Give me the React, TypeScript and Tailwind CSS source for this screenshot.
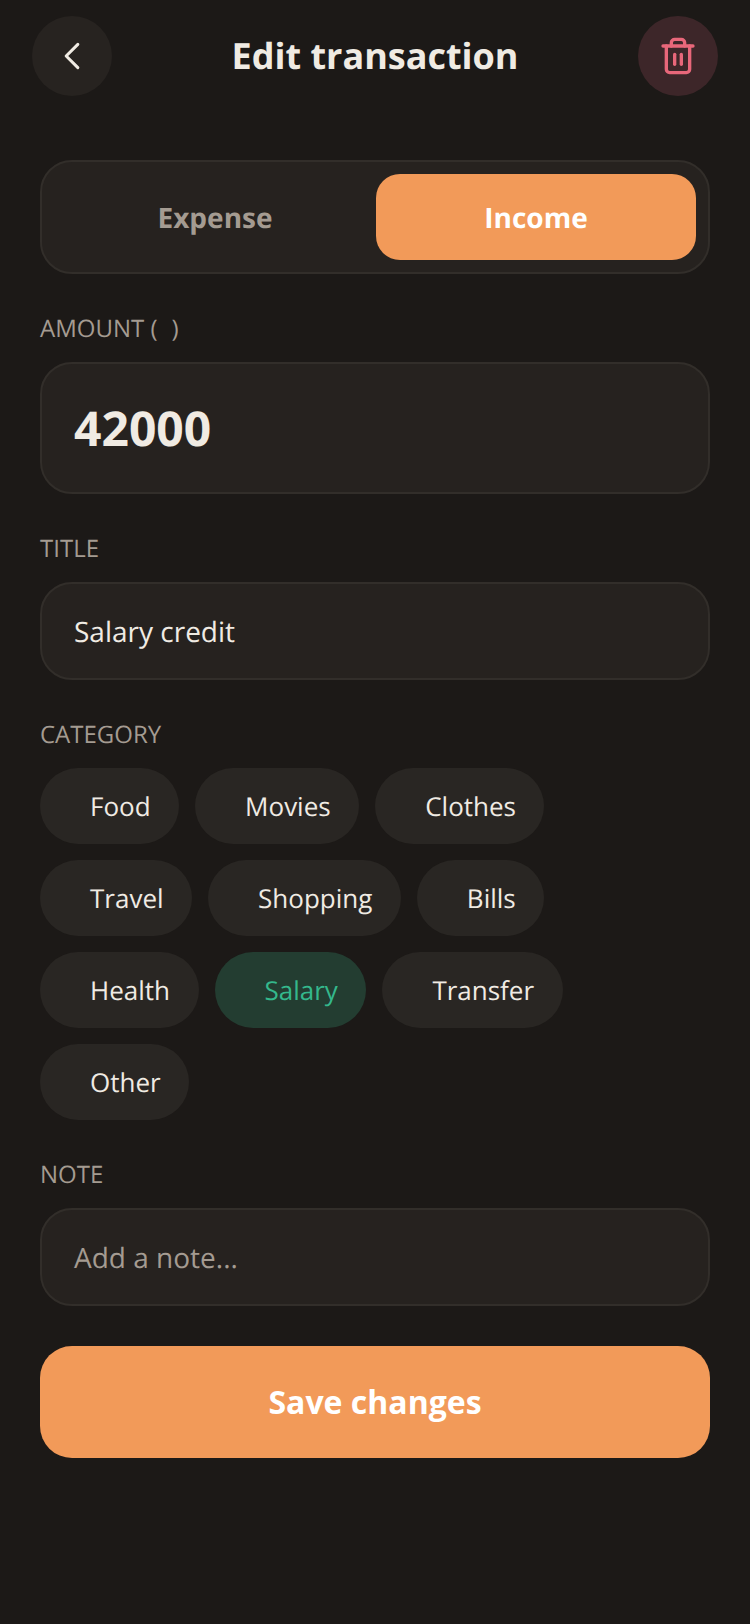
import React from "react";

const cats = [
  ["Food", false], ["Movies", false], ["Clothes", false],
  ["Travel", false], ["Shopping", false], ["Bills", false],
  ["Health", false], ["Salary", true], ["Transfer", false],
  ["Other", false],
] as const;

function Label({ children }: { children: React.ReactNode }) {
  return <div className="mt-[39px] mb-[17px] text-[24px] leading-[32px] text-[#a49b91] whitespace-pre">{children}</div>;
}

export default function App() {
  return (
    <div className="w-[750px] h-[1624px] bg-[#1c1917] font-['Open_Sans',sans-serif] [text-rendering:geometricPrecision] antialiased overflow-hidden">
      <div className="flex items-center justify-between pl-[32px] pr-[32px] pt-[16px]">
        <button className="w-[80px] h-[80px] rounded-full bg-[#272320] flex items-center justify-center text-[#f0ebe3]">
          <svg width="40" height="40" viewBox="0 0 24 24" fill="none" stroke="currentColor" strokeWidth="1.8" strokeLinecap="round" strokeLinejoin="round">
            <path d="M15.5 19l-7-7 7-7" />
          </svg>
        </button>
        <div className="text-[36px] leading-[48px] font-bold text-[#f0ebe3]">Edit transaction</div>
        <button className="w-[80px] h-[80px] rounded-full bg-[#3d2629] flex items-center justify-center text-[#e8677a]">
          <svg width="40" height="40" viewBox="0 0 24 24" fill="none" stroke="currentColor" strokeWidth="2" strokeLinecap="round" strokeLinejoin="round">
            <path d="M3 6h18" />
            <path d="M5 6v14a2 2 0 0 0 2 2h10a2 2 0 0 0 2-2V6" />
            <path d="M8 6V4a2 2 0 0 1 2-2h4a2 2 0 0 1 2 2v2" />
            <path d="M10 11v6" />
            <path d="M14 11v6" />
          </svg>
        </button>
      </div>

      <div className="px-[40px] pt-[64px] flex flex-col">
        <div className="h-[114px] rounded-[32px] border-2 border-[#322e2a] bg-[#26221f] p-[12px] flex">
          <div className="flex-1 rounded-[24px] pt-[2px] flex items-center justify-center text-[28px] font-bold text-[#a49b91]">Expense</div>
          <div className="w-[320px] rounded-[24px] pt-[2px] bg-[#f29a59] flex items-center justify-center text-[28px] font-bold text-white">Income</div>
        </div>

        <Label>AMOUNT (<span className="inline-block w-[14px]" />)</Label>
        <div className="h-[132px] rounded-[32px] border-2 border-[#322e2a] bg-[#26221f] px-[32px] pt-[2px] flex items-center">
          <span className="text-[48px] font-bold text-[#f0ebe3]">42000</span>
        </div>

        <Label>TITLE</Label>
        <div className="h-[98px] rounded-[32px] border-2 border-[#322e2a] bg-[#26221f] px-[32px] pt-[2px] flex items-center">
          <span className="text-[28px] text-[#f0ebe3]">Salary credit</span>
        </div>

        <Label>CATEGORY</Label>
        <div className="flex flex-wrap gap-[16px] w-[670px]">
          {cats.map(([name, active]) => (
            <div
              key={name}
              className={
                active
                  ? "h-[76px] rounded-full bg-[#233d31] pl-[50px] pr-[28.5px] flex items-center text-[26px] text-[#34b88c]"
                  : "h-[76px] rounded-full bg-[#292623] pl-[50px] pr-[28.5px] flex items-center text-[26px] text-[#f0ebe3]"
              }
            >
              {name}
            </div>
          ))}
        </div>

        <Label>NOTE</Label>
        <div className="h-[98px] rounded-[32px] border-2 border-[#322e2a] bg-[#26221f] px-[32px] pt-[2px] flex items-center">
          <span className="text-[28px] text-[#a49b91]">Add a note...</span>
        </div>

        <button className="mt-[40px] h-[112px] rounded-[32px] bg-[#f29a59] text-[32px] font-bold text-white">Save changes</button>
      </div>
    </div>
  );
}
